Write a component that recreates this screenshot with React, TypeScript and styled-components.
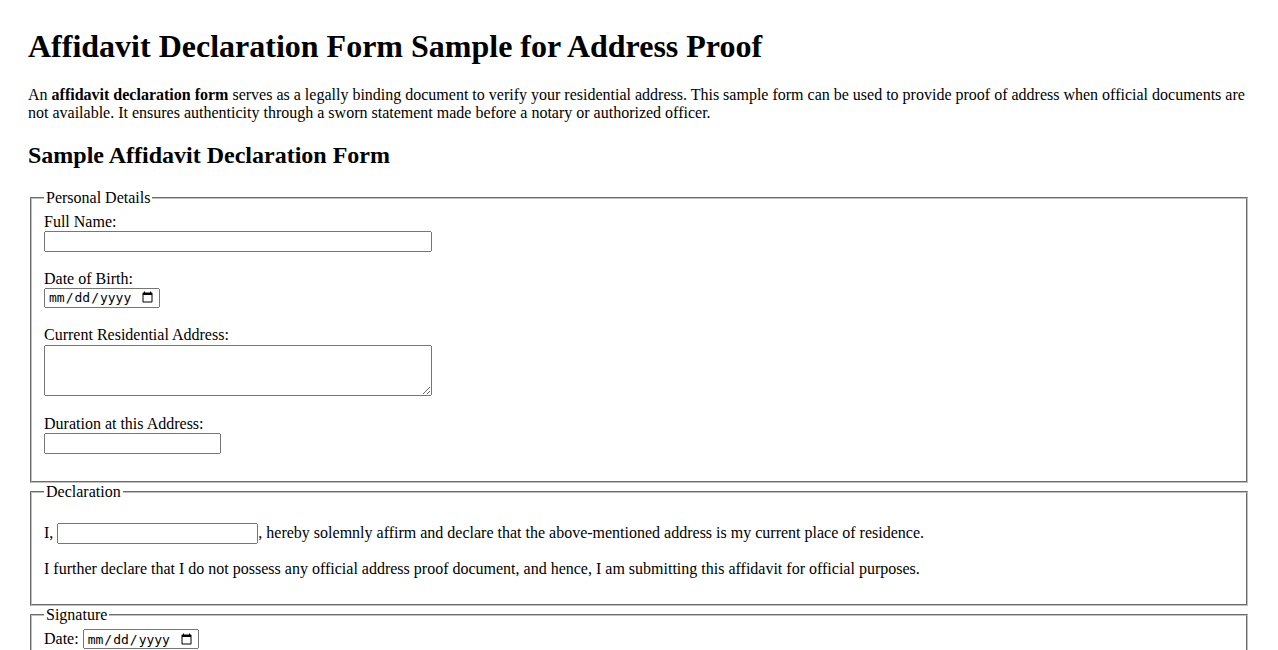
import styled, { createGlobalStyle } from "styled-components";

const GlobalStyle = createGlobalStyle`
    body {
        margin: 28px;
        font-family: "Liberation Serif", "Times New Roman", serif;
        font-size: 16px;
        color: #000;
        background: #fff;
    }
`;

const Page__title = styled.h1`
    font-size: 32px;
    font-weight: 700;
    margin: 0 0 21px;
`;

const Page__intro = styled.p`
    margin: 16px 0;
`;

const Page__subtitle = styled.h2`
    font-size: 24px;
    font-weight: 700;
    margin: 20px 0;
`;

const Form__section = styled.fieldset`
    margin: 0 2px;
    padding: 5.6px 12px 10px;
    border: 2px groove #c0c0c0;
    min-width: min-content;
`;

const Form__legend = styled.legend`
    padding: 0 2px;
`;

const Form__field = styled.div`
    margin-bottom: 18.4px;

    &:last-child {
        margin-bottom: 17.5px;
    }
`;

const Form__label = styled.label`
    display: block;
`;

const Form__input = styled.input<{ $width: number; $block?: boolean }>`
    box-sizing: border-box;
    width: ${(p) => p.$width}px;
    height: 21px;
    margin: 0;
    display: ${(p) => (p.$block ? "block" : "inline-block")};
`;

const Form__date = styled.input`
    box-sizing: border-box;
    width: 116px;
    height: 20px;
    margin: 0;
    padding: 1px 2px;
    font-size: 13px;
`;

const Form__textarea = styled.textarea`
    display: block;
    box-sizing: border-box;
    width: 388px;
    height: 51px;
    margin: 1px 0 0;
`;

const Form__statement = styled.p`
    margin: 16px 0;
`;

const Form__inline_row = styled.div`
    display: flex;
    align-items: center;
    column-gap: 4px;
    margin-bottom: 12px;
`;

export default function App() {
    return (
        <>
            <GlobalStyle />
            <Page__title>Affidavit Declaration Form Sample for Address Proof</Page__title>
            <Page__intro>
                An <strong>affidavit declaration form</strong> serves as a legally binding document to verify your residential address. This sample form can be used to provide proof of address when official documents are not available. It ensures authenticity through a sworn statement made before a notary or authorized officer.
            </Page__intro>
            <Page__subtitle>Sample Affidavit Declaration Form</Page__subtitle>
            <form onSubmit={(e) => e.preventDefault()}>
                <Form__section>
                    <Form__legend>Personal Details</Form__legend>
                    <Form__field>
                        <Form__label htmlFor="fullName">Full Name:</Form__label>
                        <Form__input id="fullName" type="text" $width={388} $block />
                    </Form__field>
                    <Form__field>
                        <Form__label htmlFor="dob">Date of Birth:</Form__label>
                        <Form__date id="dob" type="date" />
                    </Form__field>
                    <Form__field>
                        <Form__label htmlFor="address">Current Residential Address:</Form__label>
                        <Form__textarea id="address" />
                    </Form__field>
                    <Form__field>
                        <Form__label htmlFor="duration">Duration at this Address:</Form__label>
                        <Form__input id="duration" type="text" $width={177} $block />
                    </Form__field>
                </Form__section>
                <Form__section>
                    <Form__legend>Declaration</Form__legend>
                    <Form__statement>
                        I, <Form__input type="text" $width={201} />, hereby solemnly affirm and declare that the above-mentioned address is my current place of residence.
                    </Form__statement>
                    <Form__statement>
                        I further declare that I do not possess any official address proof document, and hence, I am submitting this affidavit for official purposes.
                    </Form__statement>
                </Form__section>
                <Form__section>
                    <Form__legend>Signature</Form__legend>
                    <Form__inline_row>
                        <span>Date:</span>
                        <Form__date type="date" />
                    </Form__inline_row>
                    <Form__inline_row>
                        <span>Place:</span>
                        <Form__input type="text" $width={177} />
                    </Form__inline_row>
                    <Form__inline_row>
                        <span>Signature of Declarant:</span>
                        <Form__input type="text" $width={201} />
                    </Form__inline_row>
                </Form__section>
            </form>
        </>
    );
}
